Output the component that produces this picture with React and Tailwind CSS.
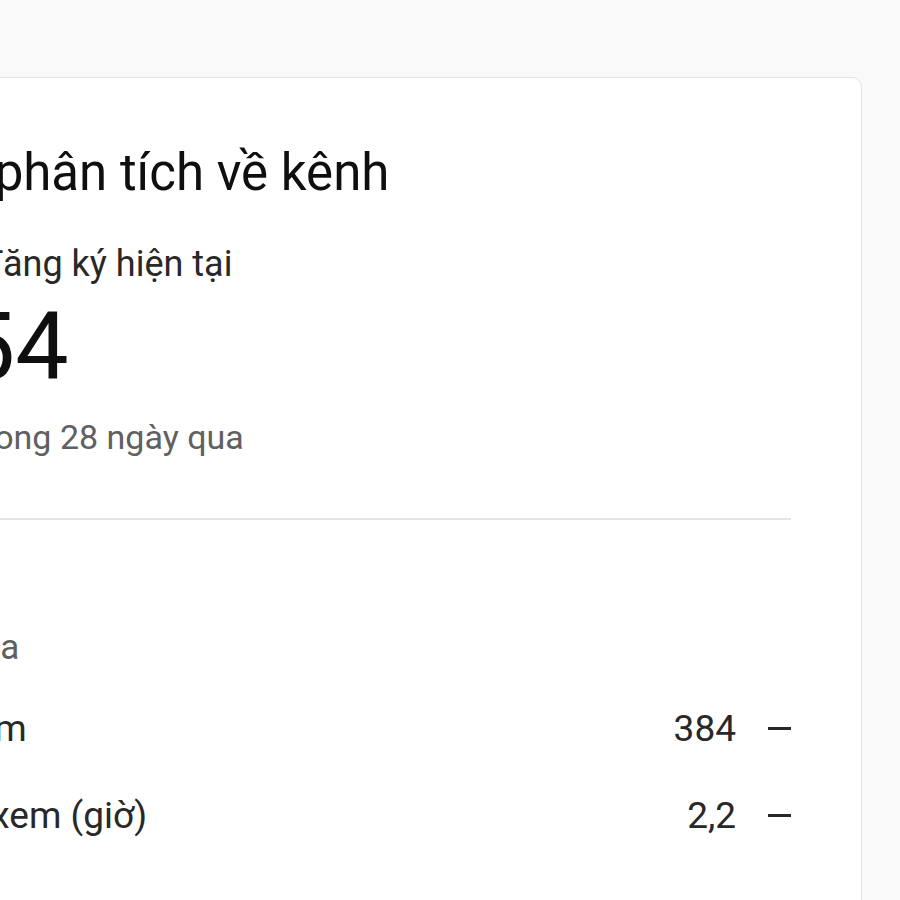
import React from "react";

const rows = [
  { label: "Số lượt xem", value: "384" },
  { label: "Thời gian xem (giờ)", value: "2,2" },
];

export default function App() {
  return (
    <div className="h-[900px] overflow-hidden bg-[#f9f9f9] pt-[77px] font-['Roboto',sans-serif]">
      <div className="ml-[-231px] w-[1093px] rounded-[10px] border border-[#e3e3e3] bg-white pl-[60px] pr-[70px] pt-[69px] pb-[200px]">
        <h2 className="text-[51px] leading-none font-normal text-[#0f0f0f]">
          Số liệu phân tích về kênh
        </h2>

        <p className="mt-[48px] text-[36px] leading-none text-[#282828]">
          Số người đăng ký hiện tại
        </p>
        <p className="mt-[17px] text-[95px] leading-none text-[#0f0f0f]">
          1.254
        </p>
        <p className="mt-[26px] text-[34px] leading-none text-[#606060]">
          +2 người trong 28 ngày qua
        </p>

        <div className="mt-[64px] h-[2px] bg-[#e5e5e5]" />

        <h3 className="mt-[45px] text-[40px] leading-none font-medium text-[#0f0f0f]">
          Tóm tắt
        </h3>
        <p className="mt-[25px] text-[35px] leading-none text-[#606060]">
          28 ngày qua
        </p>

        <div className="mt-[45px] flex flex-col gap-[50px]">
          {rows.map((row) => (
            <div key={row.label} className="flex items-center justify-between">
              <span className="text-[37px] leading-none text-[#282828]">
                {row.label}
              </span>
              <div className="flex items-center gap-[32px]">
                <span className="text-[37px] leading-none text-[#282828]">
                  {row.value}
                </span>
                <span className="block h-[3px] w-[23px] bg-[#282828]" />
              </div>
            </div>
          ))}
        </div>
      </div>
    </div>
  );
}
